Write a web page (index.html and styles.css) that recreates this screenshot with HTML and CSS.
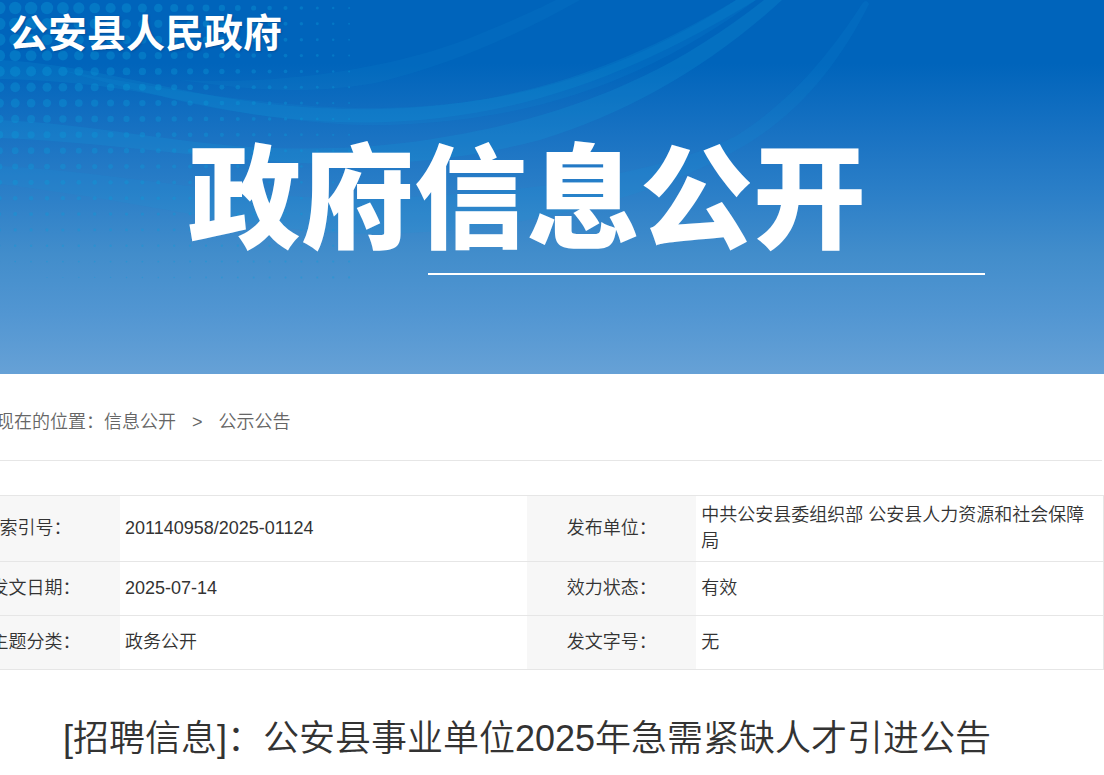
FILE: index.html
```
<!DOCTYPE html>
<html lang="zh-CN">
<head>
    <meta charset="UTF-8">
    <meta name="viewport" content="width=device-width, initial-scale=1.0">
    <title>公安县事业单位2025年急需紧缺人才引进公告</title>
    <link rel="stylesheet" href="styles.css">
</head>
<body>
    <header class="banner">
        <svg class="banner-art" width="1104" height="374" viewBox="0 0 1104 374" aria-hidden="true">
            <g fill="#14a0dc">
                <path opacity=".16" d="M0 60 C90 64 180 96 290 106 C340 110 380 110 420 107 C540 98 640 58 736 0 L756 0 C660 58 560 104 440 118 C340 130 240 116 160 96 C100 84 50 80 0 79Z"/>
                <path opacity=".12" d="M60 70 C200 96 300 109 380 108 C530 106 640 62 736 0 L756 0 C650 78 540 120 390 125 C300 128 180 104 60 70Z"/>
                <path opacity=".2" d="M0 120 C90 124 170 142 250 147 C350 152 420 144 500 126 C600 102 680 66 764 0 L782 0 C710 66 630 112 540 140 C440 166 350 168 250 160 C160 152 90 142 0 138Z"/>
                <path opacity=".1" d="M180 80 C300 86 410 62 470 38 C510 22 540 8 556 0 L580 0 C520 34 450 65 380 82 C320 94 260 92 180 80Z"/>
                <path opacity=".12" d="M0 166 C120 172 240 200 360 198 C520 196 660 174 736 136 C790 102 830 54 862 4 Q866 -2 869 4 C840 62 800 114 740 148 C640 206 500 232 380 234 C260 234 150 202 0 184Z"/>
            </g>
            <g id="dots" fill="#0a9ad8"></g>
        </svg>
        <a href="#" class="site-name">公安县人民政府</a>
        <div class="wrap">
            <p class="banner-title">政府信息公开</p>
            <div class="banner-line"></div>
        </div>
    </header>

    <main class="wrap">
        <nav class="crumbs">
            现在的位置：<a href="#">信息公开</a><span class="sep">&gt;</span><a href="#">公示公告</a>
        </nav>

        <table class="info">
            <tr>
                <th scope="row">索引号：</th>
                <td>201140958/2025-01124</td>
                <th scope="row">发布单位：</th>
                <td>中共公安县委组织部 公安县人力资源和社会保障局</td>
            </tr>
            <tr>
                <th scope="row">发文日期：</th>
                <td>2025-07-14</td>
                <th scope="row">效力状态：</th>
                <td>有效</td>
            </tr>
            <tr>
                <th scope="row">主题分类：</th>
                <td>政务公开</td>
                <th scope="row">发文字号：</th>
                <td>无</td>
            </tr>
        </table>

        <h1 class="article-title">[招聘信息]：公安县事业单位2025年急需紧缺人才引进公告</h1>
    </main>

    <script>
        // 左上角圆点，向右下方逐渐变小
        const dots = document.getElementById('dots');
        for (let row = 0; row < 18; row++) {
            for (let col = 0; col < 23; col++) {
                const x = col * 15.9 - 0.7;
                const y = row * 15.85 + 8;
                const r = 7.2 - x / 56 - y / 41 + x * y / 14000;
                if (r < 0.5) continue;
                const dot = document.createElementNS('http://www.w3.org/2000/svg', 'circle');
                dot.setAttribute('cx', x);
                dot.setAttribute('cy', y);
                dot.setAttribute('r', Math.min(r, 6.2));
                dot.setAttribute('opacity', 0.36);
                dots.appendChild(dot);
            }
        }
    </script>
</body>
</html>
```
FILE: styles.css
```
body {
    margin: 0;
    overflow-x: hidden;
    font-family: "Liberation Sans", "Noto Sans CJK SC", sans-serif;
    font-size: 18px;
    font-weight: 350;
    line-height: 26px;
    color: #333;
    background: #fff;
}
a {
    color: inherit;
    text-decoration: none;
}
.wrap {
    margin-left: -50px;
}
.banner {
    position: relative;
    overflow: hidden;
    padding-bottom: 99px;
    color: #fff;
    background: linear-gradient(#0064bb 0, #0064bb 17%, #1a73c3 37%, #2d80c8 53%, #428dcb 68%, #5296d2 84%, #66a1d6 100%);
}
.banner-art {
    position: absolute;
    top: 0;
    left: 0;
}
.site-name {
    position: relative;
    display: block;
    padding: 5px 9px;
    font-size: 39px;
    line-height: 58px;
    font-weight: bold;
    text-shadow: 1px 1px 2px rgba(0, 50, 110, 0.4);
}
.banner-title {
    position: relative;
    margin: 59px 0 0;
    font-size: 113px;
    line-height: 146px;
    font-weight: 900;
    text-align: center;
}
.banner-line {
    position: relative;
    width: 557px;
    height: 2px;
    margin-left: 478px;
    background: #fff;
}
.crumbs {
    padding: 35px 0 25px 46px;
    margin-right: 2px;
    color: #666;
    border-bottom: 1px solid #e6e6e6;
}
.sep {
    margin: 0 16px;
}
.info {
    width: 100%;
    margin-top: 34px;
    table-layout: fixed;
    border-collapse: collapse;
    border: 1px solid #e6e6e6;
}
.info tr {
    height: 54px;
    border-bottom: 1px solid #e6e6e6;
}
.info th {
    width: 169px;
    padding: 0 0 1px;
    font-weight: 350;
    background: #f7f7f7;
}
.info td {
    padding: 6px 5px 7px;
}
.article-title {
    margin: 41px 0;
    font-size: 36px;
    line-height: 56px;
    font-weight: 350;
    text-align: center;
}
@media (min-width: 1300px) {
    .wrap {
        max-width: 1152px;
        margin: 0 auto;
    }
}
```
